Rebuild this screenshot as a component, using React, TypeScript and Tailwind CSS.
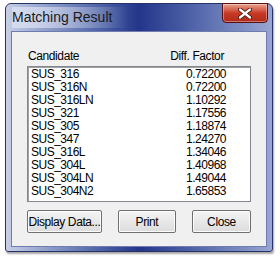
import React from 'react'

const rows: [string, string][] = [
  ['SUS_316', '0.72200'],
  ['SUS_316N', '0.72200'],
  ['SUS_316LN', '1.10292'],
  ['SUS_321', '1.17556'],
  ['SUS_305', '1.18874'],
  ['SUS_347', '1.24270'],
  ['SUS_316L', '1.34046'],
  ['SUS_304L', '1.40968'],
  ['SUS_304LN', '1.49044'],
  ['SUS_304N2', '1.65853'],
]

function Button({ label, width }: { label: string; width: string }) {
  return (
    <button
      className={`${width} h-[23px] whitespace-nowrap px-0 bg-gradient-to-b from-[#f4f4f4] to-[#dcdcdc] border border-[#707070] rounded-[2px] text-[12px] tracking-[-0.4px] text-black shadow-[inset_0_0_0_1px_#fcfcfc]`}
    >
      {label}
    </button>
  )
}

export default function App() {
  return (
    <div
      className="w-[280px] h-[260px] bg-white pt-[3px] pl-[5px]"
      style={{ fontFamily: '"Liberation Sans", Arial, sans-serif' }}
    >
      <div className="relative w-[268px] h-[249px] rounded-t-[6px] rounded-b-[3px] border border-[#273266] bg-gradient-to-r from-[#c7cfe6] via-[#24358a] to-[#9aa6d2] shadow-[1px_2px_2px_rgba(0,0,0,0.35)]">
        <div className="h-[27px] flex items-center pl-[6px] text-[14px] text-[#1a1a1a]">
          <span className="bg-gradient-to-r from-[#d6dcef] to-transparent pr-4">Matching Result</span>
        </div>
        <div className="absolute top-[-1px] right-[4px] w-[46px] h-[20px] rounded-b-[4px] border border-[#5a1010] bg-gradient-to-b from-[#e8a090] via-[#c83a24] to-[#b02a18] flex items-center justify-center shadow-[inset_0_0_0_1px_rgba(255,255,255,0.35)]">
          <svg width="14" height="11" viewBox="0 0 14 11">
            <path d="M2 1.5 L12 9.5 M12 1.5 L2 9.5" stroke="#3a0a05" strokeWidth="4" strokeLinecap="round" />
            <path d="M2 1.5 L12 9.5 M12 1.5 L2 9.5" stroke="white" strokeWidth="2.4" strokeLinecap="round" />
          </svg>
        </div>
        <div className="mx-[5px] h-[216px] bg-[#f0f0f0] border border-[#6e7cb0] px-[15px] pt-[16px]">
          <div className="flex justify-between items-center h-[16px] text-[12px] tracking-[-0.4px] text-black pl-[1px] pr-[27px]">
            <span>Candidate</span>
            <span>Diff. Factor</span>
          </div>
          <div className="mt-[2px] h-[136px] bg-white border border-[#828790] shadow-[inset_1px_1px_0_#a0a0a0] pt-[1px] pl-[3px] pr-[24px]">
            {rows.map(([name, val]) => (
              <div key={name} className="flex justify-between h-[13px] leading-[13px] text-[12px] tracking-[-0.5px] text-black">
                <span>{name}</span>
                <span>{val}</span>
              </div>
            ))}
          </div>
          <div className="flex mt-[8px] gap-[16px]">
            <Button label="Display Data..." width="w-[76px]" />
            <Button label="Print" width="w-[59px]" />
            <Button label="Close" width="w-[60px]" />
          </div>
        </div>
      </div>
    </div>
  )
}
